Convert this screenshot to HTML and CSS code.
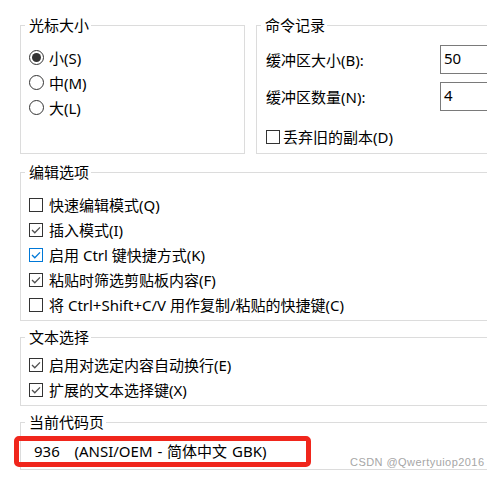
FILE: index.html
```html
<!DOCTYPE html>
<html lang="zh-CN">
<head>
<meta charset="utf-8">
<title>控制台属性 - 选项</title>
<link rel="stylesheet" href="styles.css">
</head>
<body>
<div class="page">
  <div class="sheet">
    <div class="top-row">
      <fieldset class="group g-cursor">
        <legend>光标大小</legend>
        <div class="list list-cursor">
          <div class="opt"><span class="radio checked"></span>小(S)</div>
          <div class="opt"><span class="radio"></span>中(M)</div>
          <div class="opt"><span class="radio"></span>大(L)</div>
        </div>
      </fieldset>
      <fieldset class="group g-history">
        <legend>命令记录</legend>
        <div class="history-body">
          <div class="field-grid">
            <span class="label">缓冲区大小(B):</span><span class="input">50</span>
            <span class="label">缓冲区数量(N):</span><span class="input">4</span>
          </div>
          <div class="opt opt-discard"><span class="check"></span>丢弃旧的副本(D)</div>
        </div>
      </fieldset>
    </div>

    <fieldset class="group g-edit">
      <legend>编辑选项</legend>
      <div class="list list-edit">
        <div class="opt"><span class="check"></span>快速编辑模式(Q)</div>
        <div class="opt"><span class="check"><svg viewBox="0 0 12 12" class="tick"><polyline points="2,6 4.8,8.8 10,3.4"/></svg></span>插入模式(I)</div>
        <div class="opt"><span class="check focus"><svg viewBox="0 0 12 12" class="tick"><polyline points="2,6 4.8,8.8 10,3.4"/></svg></span>启用 Ctrl 键快捷方式(K)</div>
        <div class="opt"><span class="check"><svg viewBox="0 0 12 12" class="tick"><polyline points="2,6 4.8,8.8 10,3.4"/></svg></span>粘贴时筛选剪贴板内容(F)</div>
        <div class="opt"><span class="check"></span>将 Ctrl+Shift+C/V 用作复制/粘贴的快捷键(C)</div>
      </div>
    </fieldset>

    <fieldset class="group g-select">
      <legend>文本选择</legend>
      <div class="list list-select">
        <div class="opt"><span class="check"><svg viewBox="0 0 12 12" class="tick"><polyline points="2,6 4.8,8.8 10,3.4"/></svg></span>启用对选定内容自动换行(E)</div>
        <div class="opt"><span class="check"><svg viewBox="0 0 12 12" class="tick"><polyline points="2,6 4.8,8.8 10,3.4"/></svg></span>扩展的文本选择键(X)</div>
      </div>
    </fieldset>

    <fieldset class="group g-codepage">
      <legend>当前代码页</legend>
      <div class="codepage-body">
        <div class="highlight">936   (ANSI/OEM - 简体中文 GBK)</div>
      </div>
    </fieldset>
  </div>

  <div class="watermark">CSDN @Qwertyuiop2016</div>
</div>
</body>
</html>
```

FILE: styles.css
```css
html, body {
  margin: 0;
  padding: 0;
  overflow: hidden;
  background: #ffffff;
}

body {
  font-family: "Noto Sans", "Noto Sans CJK SC", sans-serif;
  font-size: 15px;
  color: #000000;
}

.page {
  position: relative;
  width: 487px;
  height: 478px;
  padding: 15px 0 0 20px;
  box-sizing: border-box;
  overflow: hidden;
}

.sheet {
  width: 520px;
}

.top-row {
  display: grid;
  grid-template-columns: 225px 1fr;
  column-gap: 11px;
}

.group {
  margin: 0;
  padding: 0;
  min-width: 0;
  border: 1px solid #dcdcdc;
  box-sizing: border-box;
}

.group legend {
  margin-left: 4px;
  padding: 0 2px 0 4px;
  line-height: 20px;
  font-size: 15px;
}

.g-cursor,
.g-history {
  height: 139px;
}

.list {
  display: flex;
  flex-direction: column;
  padding-left: 8px;
}

.list-cursor {
  padding-top: 10px;
}

.opt {
  display: flex;
  align-items: center;
  height: 25px;
  line-height: 20px;
  white-space: nowrap;
}

.radio {
  width: 15px;
  height: 15px;
  box-sizing: border-box;
  border: 1px solid #333333;
  border-radius: 50%;
  margin-right: 5px;
  display: flex;
  align-items: center;
  justify-content: center;
  flex: none;
}

.radio.checked::after {
  content: "";
  width: 9px;
  height: 9px;
  border-radius: 50%;
  background: #333333;
}

.check {
  width: 14px;
  height: 14px;
  box-sizing: border-box;
  border: 1px solid #333333;
  background: #ffffff;
  margin-right: 6px;
  flex: none;
  display: flex;
}

.tick {
  width: 12px;
  height: 12px;
  fill: none;
  stroke: #4f4f4f;
  stroke-width: 1.3;
}

.check.focus {
  border-color: #0078d7;
}

.check.focus .tick {
  stroke: #0078d7;
}

.history-body {
  padding: 10px 0 0 9px;
}

.field-grid {
  display: grid;
  grid-template-columns: 174px 80px;
  grid-auto-rows: 29px;
  row-gap: 8px;
  align-items: center;
}

.label {
  line-height: 20px;
  padding-top: 1px;
}

.input {
  height: 29px;
  box-sizing: border-box;
  border: 1px solid #7a7a7a;
  padding-left: 3px;
  line-height: 25px;
}

.opt-discard {
  margin-top: 13px;
}

.opt-discard .check {
  margin-right: 3px;
}

.g-edit {
  margin-top: 8px;
}

.list-edit {
  padding-top: 10px;
  padding-bottom: 3px;
}

.g-select {
  margin-top: 6px;
}

.list-select {
  padding-top: 5px;
  padding-bottom: 3px;
}

.g-codepage {
  margin-top: 6px;
}

.codepage-body {
  padding: 4px 0 2px 0;
}

.highlight {
  margin-left: -7px;
  width: 297px;
  height: 31px;
  box-sizing: border-box;
  border: 5px solid #f0261c;
  border-radius: 5px;
  padding-left: 15px;
  line-height: 21px;
  white-space: pre;
  word-spacing: 1px;
}

.watermark {
  position: absolute;
  left: 350px;
  top: 456px;
  font-family: "Liberation Sans", Arial, sans-serif;
  font-size: 11px;
  line-height: 13px;
  color: #a6a6a6;
  letter-spacing: 0.45px;
}
```
